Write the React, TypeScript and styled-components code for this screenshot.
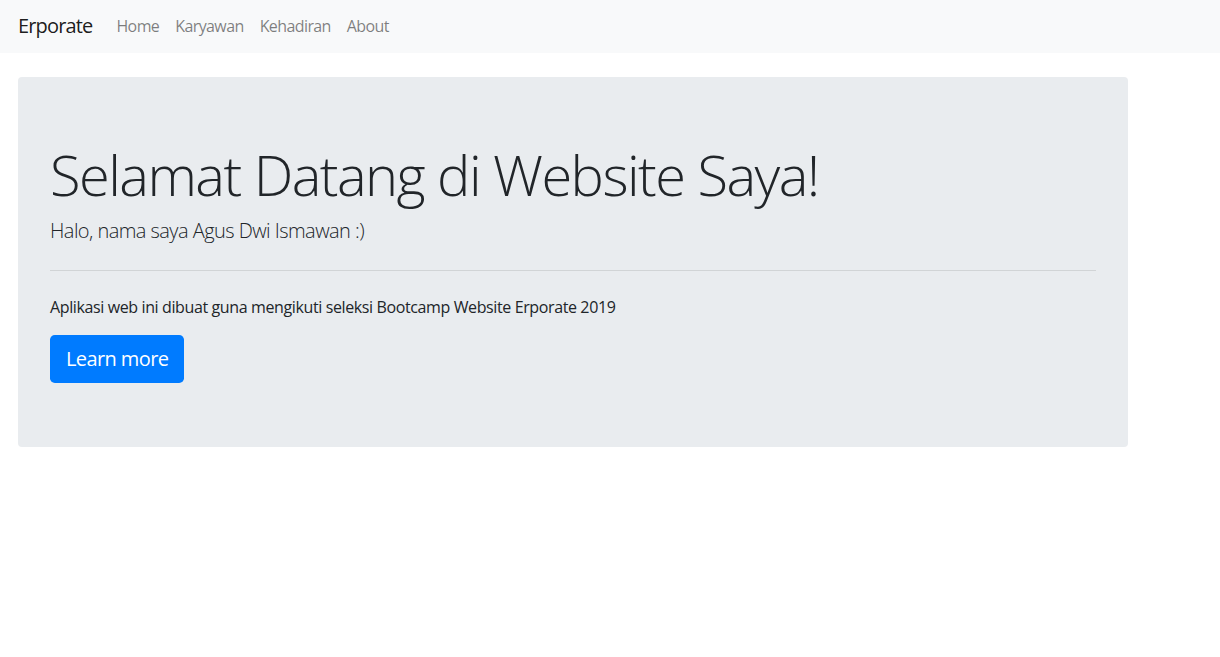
import React from "react";
import styled, { createGlobalStyle } from "styled-components";

const Global = createGlobalStyle`
  html, body { margin: 0; padding: 0; background: #fff; }
  body {
    font-family: "Open Sans", "Noto Sans", "Liberation Sans", sans-serif;
    font-size: 16px;
    line-height: 1.5;
    color: #212529;
  }
  * { box-sizing: border-box; }
`;

const NavBar = styled.nav`
  display: flex;
  align-items: center;
  height: 53px;
  padding: 0 16px 2px 18px;
  background: #f8f9fa;
`;

const Brand = styled.a`
  font-size: 20px;
  color: rgba(0, 0, 0, 0.9);
  text-decoration: none;
  margin-right: 16px;
  letter-spacing: -0.85px;
`;

const NavList = styled.div`
  display: flex;
  align-items: center;
`;

const NavLink = styled.a`
  font-size: 16px;
  color: rgba(0, 0, 0, 0.5);
  text-decoration: none;
  padding: 0 8px;
  letter-spacing: -0.6px;
`;

const Main = styled.main`
  padding: 24px 0 0 18px;
`;

const Jumbotron = styled.section`
  width: 1110px;
  background: #e9ecef;
  border-radius: 4px;
  padding: 64px 32px;
`;

const Display = styled.h1`
  margin: 0 0 8px;
  font-size: 56px;
  font-weight: 300;
  line-height: 1.2;
  letter-spacing: -1.55px;
  color: #212529;
`;

const Lead = styled.p`
  margin: 0;
  font-size: 20px;
  font-weight: 300;
  line-height: 1.5;
  letter-spacing: -0.55px;
`;

const Rule = styled.hr`
  margin: 24px 0;
  border: 0;
  border-top: 1px solid rgba(0, 0, 0, 0.1);
`;

const Text = styled.p`
  margin: 0 0 16px;
  font-size: 16px;
  letter-spacing: -0.38px;
`;

const Button = styled.a`
  display: inline-flex;
  align-items: center;
  justify-content: center;
  height: 48px;
  padding: 0 16px;
  font-size: 20px;
  white-space: nowrap;
  color: #fff;
  background: #007bff;
  border-radius: 4.8px;
  text-decoration: none;
  letter-spacing: -0.6px;
`;

export default function App() {
  return (
    <>
      <Global />
      <NavBar>
        <Brand href="#">Erporate</Brand>
        <NavList>
          <NavLink href="#">Home</NavLink>
          <NavLink href="#">Karyawan</NavLink>
          <NavLink href="#">Kehadiran</NavLink>
          <NavLink href="#">About</NavLink>
        </NavList>
      </NavBar>
      <Main>
        <Jumbotron>
          <Display>Selamat Datang di Website Saya!</Display>
          <Lead>Halo, nama saya Agus Dwi Ismawan :)</Lead>
          <Rule />
          <Text>Aplikasi web ini dibuat guna mengikuti seleksi Bootcamp Website Erporate 2019</Text>
          <Button href="#">Learn more</Button>
        </Jumbotron>
      </Main>
    </>
  );
}
